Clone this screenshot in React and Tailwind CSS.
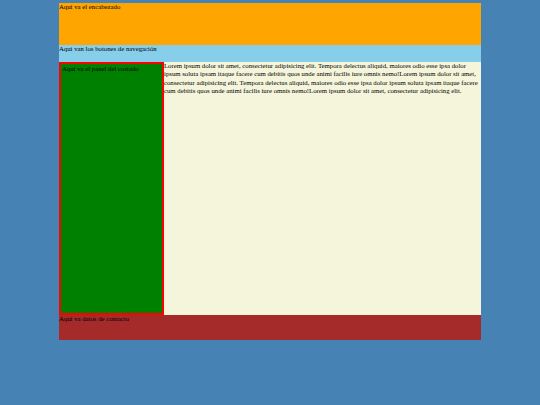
export default function App() {
  return (
    <div className="min-h-screen w-full bg-[#4682b4] pt-[3px] font-['Liberation_Serif',serif] text-[6.75px] leading-[8.3px] text-black">
      <div className="ml-[59px] w-[422px]">
        {/* Encabezado */}
        <header className="h-[42px] bg-[#ffa500]">Aquí va el encabezado</header>

        {/* Navegación */}
        <nav className="h-[17px] bg-[#87ceeb]">Aquí van los botones de navegación</nav>

        {/* Cuerpo */}
        <div className="flex h-[253px]">
          <aside className="w-[105px] shrink-0 border-2 border-[#ff0000] bg-[#008000] pl-[1px] pt-[1px]">
            Aquí va el panel del costado
          </aside>
          <main className="flex-1 bg-[#f5f5dc]">
            Lorem ipsum dolor sit amet, consectetur adipisicing elit. Tempora delectus aliquid, maiores odio esse ipsa dolor ipsum soluta ipsam itaque facere cum debitis quos unde animi facilis iure omnis nemo!Lorem ipsum dolor sit amet, consectetur adipisicing elit. Tempora delectus aliquid, maiores odio esse ipsa dolor ipsum soluta ipsam itaque facere cum debitis quos unde animi facilis iure omnis nemo!Lorem ipsum dolor sit amet, consectetur adipisicing elit.
          </main>
        </div>

        {/* Pie */}
        <footer className="h-[25px] bg-[#a52a2a]">Aquí va datos de contacto</footer>
      </div>
    </div>
  );
}
